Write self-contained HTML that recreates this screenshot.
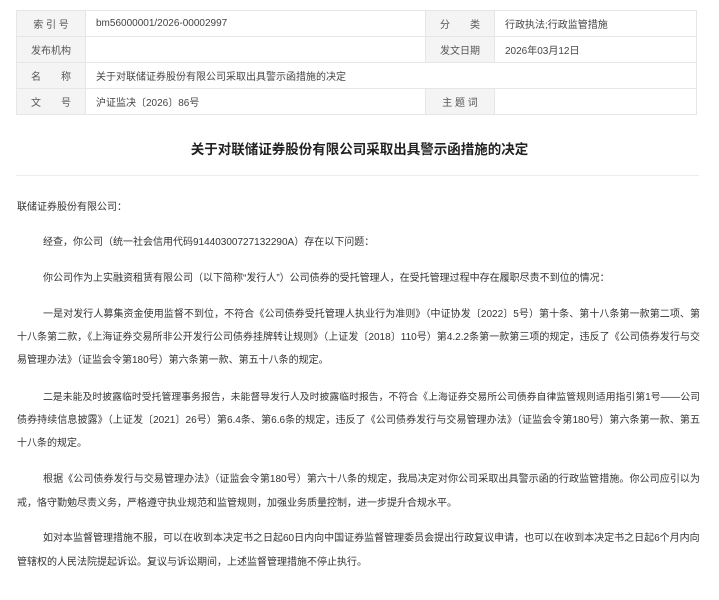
<!DOCTYPE html>
<html><head><meta charset="utf-8"><style>
*{margin:0;padding:0;box-sizing:border-box}
body{width:719px;height:600px;background:#fff;font-family:"Liberation Sans","Noto Sans CJK SC",sans-serif;color:#333;position:relative;overflow:hidden}
table{position:absolute;left:16px;top:10px;width:681px;border-collapse:collapse;font-size:10px}
td{border:1px solid #e6e6e6;height:26px;padding:0 10px;color:#444}
td.l{background:#f4f4f4;text-align:center;color:#555;width:69px;padding:0}
.title{position:absolute;top:138px;left:0;width:719px;text-align:center;font-size:13.5px;font-weight:bold;color:#222}
.sep{position:absolute;left:16px;top:175px;width:683px;height:1px;background:#ececec}
.ln{position:absolute;left:17px;width:683px;font-size:10px;line-height:14px;white-space:nowrap;overflow:hidden;text-align:justify;text-align-last:justify;color:#333}
.ln.e{text-align-last:left}
.i{padding-left:26px}
</style></head><body>
<table>
<tr><td class="l">索 引 号</td><td style="width:340px">bm56000001/2026-00002997</td><td class="l" style="width:68px">分　　类</td><td>行政执法;行政监管措施</td></tr>
<tr><td class="l">发布机构</td><td></td><td class="l">发文日期</td><td>2026年03月12日</td></tr>
<tr><td class="l">名　　称</td><td colspan="3">关于对联储证券股份有限公司采取出具警示函措施的决定</td></tr>
<tr><td class="l">文　　号</td><td>沪证监决〔2026〕86号</td><td class="l">主 题 词</td><td></td></tr>
</table>
<div class="title">关于对联储证券股份有限公司采取出具警示函措施的决定</div>
<div class="sep"></div>
<div class="ln e" style="top:201px">联储证券股份有限公司：</div>
<div class="ln e i" style="top:236px">经查，你公司（统一社会信用代码91440300727132290A）存在以下问题：</div>
<div class="ln e i" style="top:272px">你公司作为上实融资租赁有限公司（以下简称“发行人”）公司债券的受托管理人，在受托管理过程中存在履职尽责不到位的情况：</div>
<div class="ln i" style="top:308px">一是对发行人募集资金使用监督不到位，不符合《公司债券受托管理人执业行为准则》（中证协发〔2022〕5号）第十条、第十八条第一款第二项、第</div>
<div class="ln" style="top:331px">十八条第二款，《上海证券交易所非公开发行公司债券挂牌转让规则》（上证发〔2018〕110号）第4.2.2条第一款第三项的规定，违反了《公司债券发行与交</div>
<div class="ln e" style="top:354px">易管理办法》（证监会令第180号）第六条第一款、第五十八条的规定。</div>
<div class="ln i" style="top:391px;font-size:9.8px">二是未能及时披露临时受托管理事务报告，未能督导发行人及时披露临时报告，不符合《上海证券交易所公司债券自律监管规则适用指引第1号——公司</div>
<div class="ln" style="top:414px">债券持续信息披露》（上证发〔2021〕26号）第6.4条、第6.6条的规定，违反了《公司债券发行与交易管理办法》（证监会令第180号）第六条第一款、第五</div>
<div class="ln e" style="top:437px">十八条的规定。</div>
<div class="ln i" style="top:473px">根据《公司债券发行与交易管理办法》（证监会令第180号）第六十八条的规定，我局决定对你公司采取出具警示函的行政监管措施。你公司应引以为</div>
<div class="ln e" style="top:497px">戒，恪守勤勉尽责义务，严格遵守执业规范和监管规则，加强业务质量控制，进一步提升合规水平。</div>
<div class="ln i" style="top:532px">如对本监督管理措施不服，可以在收到本决定书之日起60日内向中国证券监督管理委员会提出行政复议申请，也可以在收到本决定书之日起6个月内向有</div>
<div class="ln e" style="top:556px">管辖权的人民法院提起诉讼。复议与诉讼期间，上述监督管理措施不停止执行。</div>
</body></html>
